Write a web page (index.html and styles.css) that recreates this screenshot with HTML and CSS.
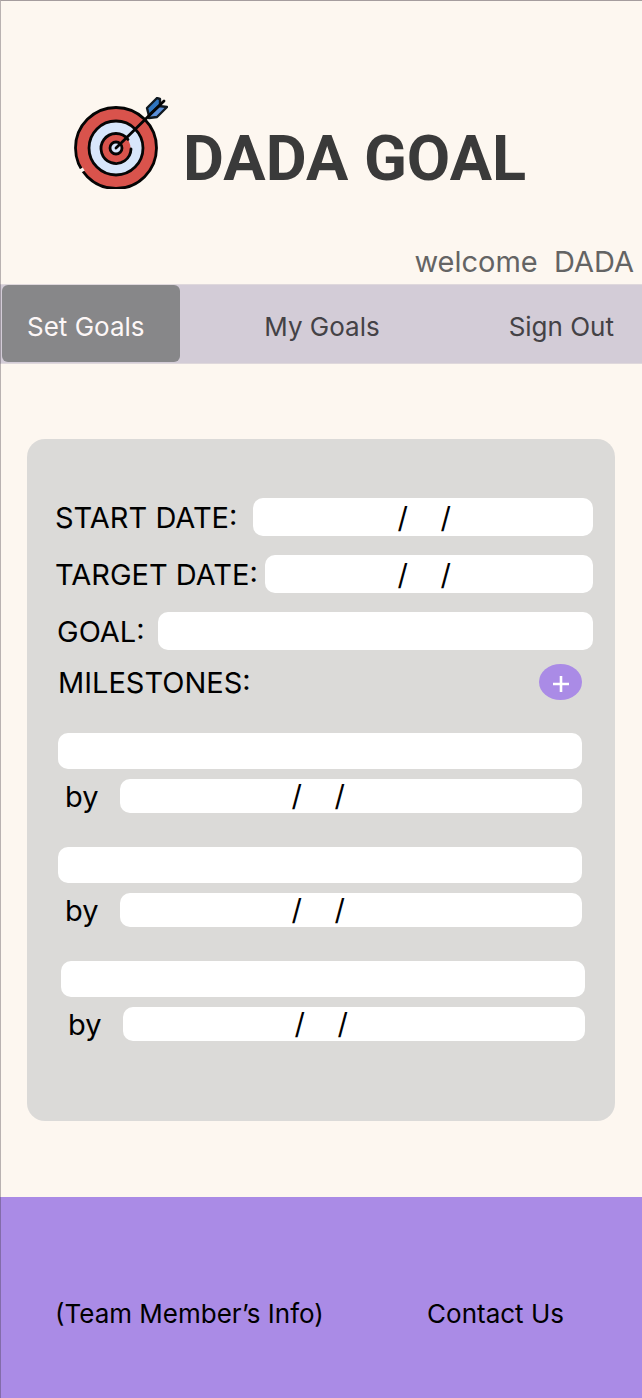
FILE: index.html
```html
<!DOCTYPE html>
<html lang="en">
<head>
  <meta charset="utf-8">
  <meta name="viewport" content="width=device-width, initial-scale=1">
  <title>DADA GOAL</title>
  <link rel="stylesheet" href="styles.css">
</head>
<body class="page">
  <header class="header">
    <div class="brand">
      <svg class="brand-logo" viewBox="0 0 94 92" aria-hidden="true">
        <circle cx="42" cy="51" r="40.500" fill="#d9534c"/>
        <path d="M66 18a40.500 40.500 0 0 1-16 72.500a42 42 0 0 0 16-72.500z" fill="#c9463f"/>
        <circle cx="42" cy="51" r="27" fill="#d8e6fb"/>
        <circle cx="42" cy="51" r="14.500" fill="#d9534c"/>
        <circle cx="42" cy="51" r="6" fill="#d8e6fb"/>
        <g fill="none" stroke="#050505" stroke-width="2.800" stroke-linecap="round">
          <circle cx="42" cy="51" r="40.500"/>
          <circle cx="42" cy="51" r="27"/>
          <path d="M57 52a15 15 0 1 1-3-9.500"/>
          <circle cx="42" cy="51" r="6"/>
        </g>
        <path d="M7 71.500l2 3" stroke="#fdf7f0" stroke-width="4"/>
        <path d="M75 19L73 11l10-10 3 1 0 6-10 10z" fill="#2f75c0" stroke="#101820" stroke-width="2.400" stroke-linejoin="round"/>
        <path d="M75 18l10-9 8 1-10 10-8 1z" fill="#5b8fd8" stroke="#101820" stroke-width="2.400" stroke-linejoin="round"/>
        <path d="M42 51L90 4" stroke="#050505" stroke-width="2.800" stroke-linecap="round"/>
      </svg>
      <h1 class="brand-name">DADA GOAL</h1>
    </div>
    <p class="welcome">welcome&nbsp; DADA</p>
  </header>

  <nav class="nav">
    <a class="nav-link nav-link-active" href="#set-goals" aria-current="page">Set Goals</a>
    <a class="nav-link nav-link-middle" href="#my-goals">My Goals</a>
    <a class="nav-link nav-link-end" href="#sign-out">Sign Out</a>
  </nav>

  <main class="main">
    <form class="card" id="set-goals">
      <div class="fields">
        <div class="field">
          <label class="label" for="start">START DATE:</label>
          <input class="input input-date field-start" id="start" type="text" value="/    /">
        </div>
        <div class="field">
          <label class="label" for="target">TARGET DATE:</label>
          <input class="input input-date" id="target" type="text" value="/    /">
        </div>
        <div class="field field-inset">
          <label class="label" for="goal">GOAL:</label>
          <input class="input field-goal" id="goal" type="text">
        </div>
      </div>
      <div class="milestones-head">
        <h2 class="label">MILESTONES:</h2>
        <button class="add" type="button" aria-label="Add milestone">
          <svg class="add-icon" viewBox="0 0 16 16" aria-hidden="true"><path d="M8 0v16M0 8h16" stroke="#fff" stroke-width="2.600"/></svg>
        </button>
      </div>
      <div class="milestones">
        <div class="milestone">
          <input class="input input-milestone" type="text" aria-label="Milestone 1">
          <div class="due">
            <label class="label due-label" for="by1">by</label>
            <input class="input input-due" id="by1" type="text" value="/    /">
          </div>
        </div>
        <div class="milestone">
          <input class="input input-milestone" type="text" aria-label="Milestone 2">
          <div class="due">
            <label class="label due-label" for="by2">by</label>
            <input class="input input-due" id="by2" type="text" value="/    /">
          </div>
        </div>
        <div class="milestone milestone-last">
          <input class="input input-milestone" type="text" aria-label="Milestone 3">
          <div class="due">
            <label class="label due-label" for="by3">by</label>
            <input class="input input-due" id="by3" type="text" value="/    /">
          </div>
        </div>
      </div>
    </form>
  </main>

  <footer class="footer">
    <a class="footer-link" href="#team">(Team Member’s Info)</a>
    <a class="footer-link" href="#contact">Contact Us</a>
  </footer>
</body>
</html>
```
FILE: styles.css
```css
* {
  box-sizing: border-box;
}

.page {
  position: relative;
  display: flex;
  flex-direction: column;
  min-height: 100vh;
  margin: 0;
  background: #fdf7f0;
  color: #000;
  font-family: Inter, sans-serif;
}

/* Thin frame along the top and left edges */
.page::after {
  content: "";
  position: absolute;
  inset: 0;
  border-top: 1px solid rgba(60, 50, 60, 0.45);
  border-left: 1px solid rgba(60, 50, 60, 0.35);
  pointer-events: none;
}

.header {
  padding: 97px 8px 4px 74px;
}

.brand {
  display: flex;
  align-items: flex-start;
  gap: 15px;
}

.brand-logo {
  width: 94px;
  height: 92px;
  flex: none;
}

.brand-name {
  margin: 26px 0 0;
  color: #3a3a3a;
  font-family: Roboto, sans-serif;
  font-size: 63px;
  font-weight: 700;
  line-height: 72px;
}

.welcome {
  margin: 49px 0 0;
  color: #646464;
  font-size: 29px;
  line-height: 36px;
  text-align: right;
}

.nav {
  display: grid;
  grid-template-columns: repeat(3, 1fr);
  padding: 0 0 1px 2px;
  border: solid #dfd8dc;
  border-width: 1px 0;
  background: #d3ccd7;
}

.nav-link {
  padding: 25px 0 19px;
  color: #444246;
  font-size: 26px;
  line-height: 33px;
  text-decoration: none;
  white-space: nowrap;
}

.nav-link-active {
  justify-self: start;
  padding: 25px 35px 19px 25px;
  border-radius: 6px;
  background: #878789;
  color: #fdf7f7;
}

.nav-link-middle {
  justify-self: center;
}

.nav-link-end {
  justify-self: end;
  padding-right: 28px;
}

.main {
  padding: 75px 27px 76px;
}

.card {
  padding: 59px 22px 80px 28px;
  border-radius: 18px;
  background: #dbdad8;
}

.fields {
  display: grid;
  gap: 19px;
}

.field {
  display: flex;
  align-items: center;
}

.field-inset {
  padding-left: 2px;
}

.label {
  margin: 0;
  padding-top: 2px;
  font-size: 29px;
  font-weight: 400;
  line-height: 32px;
  white-space: nowrap;
}

.input {
  flex: 1;
  min-width: 0;
  width: 100%;
  height: 38px;
  margin-left: 7px;
  padding: 0 12px;
  border: 0;
  border-radius: 10px;
  background: #fff;
  color: #000;
  font: 400 29px/34px Inter, sans-serif;
}

.input-date {
  padding-right: 142px;
  text-align: right;
}

.field-start {
  margin-left: 16px;
}

.field-goal {
  margin-left: 13px;
}

.milestones-head {
  display: flex;
  align-items: center;
  justify-content: space-between;
  margin: 14px 11px 33px 3px;
}

.add {
  display: grid;
  place-items: center;
  width: 43px;
  height: 36px;
  padding: 3px 0 0;
  border: 0;
  border-radius: 50%;
  background: #aa8be6;
}

.add-icon {
  width: 16px;
  height: 16px;
}

.milestones {
  display: grid;
  gap: 34px;
  margin: 0 11px 0 3px;
}

.milestone {
  display: grid;
  gap: 10px;
}

.milestone-last {
  margin: 0 -3px 0 3px;
}

.input-milestone {
  height: 36px;
  margin-left: 0;
}

.due {
  display: flex;
  align-items: center;
}

.due-label {
  flex: none;
  width: 62px;
  padding-left: 7px;
}

.input-due {
  height: 34px;
  margin-left: 0;
  padding-right: 237px;
  text-align: right;
}

.footer {
  display: flex;
  flex: 1;
  align-items: flex-start;
  justify-content: space-between;
  padding: 100px 78px 68px 55px;
  background: #aa8be6;
}

.footer-link {
  color: #000;
  font-size: 26px;
  line-height: 33px;
  text-decoration: none;
}
```
